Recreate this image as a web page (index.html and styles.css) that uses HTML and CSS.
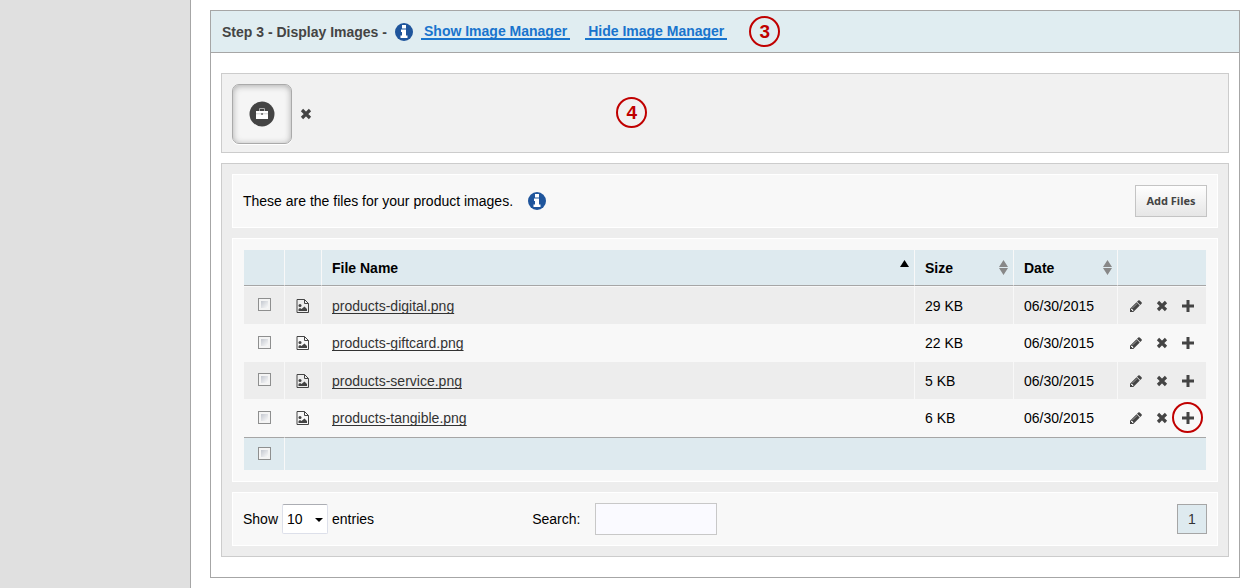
FILE: index.html
```html
<!DOCTYPE html>
<html lang="en">
<head>
    <meta charset="utf-8">
    <title>Display Images</title>
    <link rel="stylesheet" href="styles.css">
</head>
<body>
    <svg class="sprite" aria-hidden="true">
        <symbol id="info" viewBox="0 0 18 18">
            <circle cx="9" cy="9" r="9" fill="#1f559c"/>
            <path d="M7 2h4v3.500H7zM6 6.500h5v6h1.500v2.500h-7v-2.500H7V9H6z" fill="#fff"/>
        </symbol>
        <symbol id="file" viewBox="0 0 13 14">
            <path d="M1 .5h7.500l4 4v9H1z" fill="none" stroke="#444"/>
            <path d="M8.500 .5v4h4" fill="none" stroke="#444"/>
            <circle cx="4" cy="6.500" r="1.500" fill="#444"/>
            <path d="M2.500 12v-2l1.500-1 1.500 1 3-2.500 2.500 2.500v2z" fill="#444"/>
        </symbol>
        <symbol id="pencil" viewBox="128 128 1536 1536">
            <path fill="#444" d="M491 1536l91-91-235-235-91 91v107h128v128h107zm523-928q0-22-22-22-10 0-17 7l-542 542q-7 7-7 17 0 22 22 22 10 0 17-7l542-542q7-7 7-17zm-54-192l416 416-832 832h-416v-416zm683 96q0 53-37 90l-166 166-416-416 166-165q36-38 90-38 53 0 91 38l235 234q37 39 37 91z"/>
        </symbol>
        <symbol id="cross" viewBox="0 0 12 12">
            <path d="M2 2l8 8M10 2L2 10" stroke="#444" stroke-width="3.200"/>
        </symbol>
        <symbol id="plus" viewBox="0 0 12 12">
            <path d="M0 6h12M6 0v12" stroke="#444" stroke-width="3"/>
        </symbol>
        <symbol id="briefcase" viewBox="0 0 26 26">
            <circle cx="13" cy="13" r="12.500" fill="#444"/>
            <path d="M10.500 10V7.500h5V10" fill="none" stroke="#aaa"/>
            <path d="M7 10h12v8H7z" fill="#fff"/>
            <path d="M7 12.500h12v.7H7z" fill="#bbb"/>
            <path d="M12.300 12h1.500v2h-1.500z" fill="#666"/>
        </symbol>
    </svg>

    <div class="sidebar"></div>
    <div class="main">
        <div class="step">
            <div class="step-header">
                <span class="step-title">Step 3 - Display Images -</span>
                <svg class="info"><use href="#info"/></svg>
                <a class="step-link" href="#">Show Image Manager</a>
                <a class="step-link" href="#">Hide Image Manager</a>
                <span class="badge">3</span>
            </div>
            <div class="step-body">
                <div class="selected">
                    <div class="thumb"><svg><use href="#briefcase"/></svg></div>
                    <button class="icon-btn" type="button" aria-label="Remove"><svg><use href="#cross"/></svg></button>
                    <span class="badge badge-over">4</span>
                </div>

                <div class="manager">
                    <div class="panel">
                        <span>These are the files for your product images.</span>
                        <svg class="info"><use href="#info"/></svg>
                        <button class="add-btn" type="button">Add Files</button>
                    </div>

                    <div class="panel panel-table">
                        <table class="files">
                            <colgroup>
                                <col class="col-check"><col class="col-type"><col><col class="col-size"><col class="col-date"><col class="col-actions">
                            </colgroup>
                            <thead>
                                <tr>
                                    <th></th>
                                    <th></th>
                                    <th><div class="sort">File Name <svg class="sort-up" viewBox="0 0 9 7"><path d="M4.500 0L9 7H0z"/></svg></div></th>
                                    <th><div class="sort">Size <svg class="sort-both" viewBox="0 0 9 15"><path d="M4.500 0L9 7H0zM0 8h9l-4.500 7z"/></svg></div></th>
                                    <th><div class="sort">Date <svg class="sort-both" viewBox="0 0 9 15"><path d="M4.500 0L9 7H0zM0 8h9l-4.500 7z"/></svg></div></th>
                                    <th></th>
                                </tr>
                            </thead>
                            <tbody>
                                <tr>
                                    <td><input class="check" type="checkbox" aria-label="Select products-digital.png"></td>
                                    <td><svg class="file"><use href="#file"/></svg></td>
                                    <td><a href="#">products-digital.png</a></td>
                                    <td>29 KB</td>
                                    <td>06/30/2015</td>
                                    <td><div class="actions">
                                        <button class="icon-btn" type="button" aria-label="Edit"><svg><use href="#pencil"/></svg></button>
                                        <button class="icon-btn" type="button" aria-label="Delete"><svg><use href="#cross"/></svg></button>
                                        <button class="icon-btn" type="button" aria-label="Add"><svg><use href="#plus"/></svg></button>
                                    </div></td>
                                </tr>
                                <tr>
                                    <td><input class="check" type="checkbox" aria-label="Select products-giftcard.png"></td>
                                    <td><svg class="file"><use href="#file"/></svg></td>
                                    <td><a href="#">products-giftcard.png</a></td>
                                    <td>22 KB</td>
                                    <td>06/30/2015</td>
                                    <td><div class="actions">
                                        <button class="icon-btn" type="button" aria-label="Edit"><svg><use href="#pencil"/></svg></button>
                                        <button class="icon-btn" type="button" aria-label="Delete"><svg><use href="#cross"/></svg></button>
                                        <button class="icon-btn" type="button" aria-label="Add"><svg><use href="#plus"/></svg></button>
                                    </div></td>
                                </tr>
                                <tr>
                                    <td><input class="check" type="checkbox" aria-label="Select products-service.png"></td>
                                    <td><svg class="file"><use href="#file"/></svg></td>
                                    <td><a href="#">products-service.png</a></td>
                                    <td>5 KB</td>
                                    <td>06/30/2015</td>
                                    <td><div class="actions">
                                        <button class="icon-btn" type="button" aria-label="Edit"><svg><use href="#pencil"/></svg></button>
                                        <button class="icon-btn" type="button" aria-label="Delete"><svg><use href="#cross"/></svg></button>
                                        <button class="icon-btn" type="button" aria-label="Add"><svg><use href="#plus"/></svg></button>
                                    </div></td>
                                </tr>
                                <tr>
                                    <td><input class="check" type="checkbox" aria-label="Select products-tangible.png"></td>
                                    <td><svg class="file"><use href="#file"/></svg></td>
                                    <td><a href="#">products-tangible.png</a></td>
                                    <td>6 KB</td>
                                    <td>06/30/2015</td>
                                    <td><div class="actions">
                                        <button class="icon-btn" type="button" aria-label="Edit"><svg><use href="#pencil"/></svg></button>
                                        <button class="icon-btn" type="button" aria-label="Delete"><svg><use href="#cross"/></svg></button>
                                        <button class="icon-btn ringed" type="button" aria-label="Add"><svg><use href="#plus"/></svg></button>
                                    </div></td>
                                </tr>
                            </tbody>
                            <tfoot>
                                <tr>
                                    <td><input class="check" type="checkbox" aria-label="Select all"></td>
                                    <td colspan="5"></td>
                                </tr>
                            </tfoot>
                        </table>
                    </div>

                    <div class="panel">
                        <div class="length">
                            <label for="length">Show</label>
                            <span class="select-wrap">
                                <select id="length"><option>10</option><option>25</option></select>
                                <svg class="caret" viewBox="0 0 8 4"><path d="M0 0h8L4 4z"/></svg>
                            </span>
                            <span>entries</span>
                        </div>
                        <div class="search">
                            <label for="search">Search:</label>
                            <input id="search" type="text">
                        </div>
                        <button class="page" type="button">1</button>
                    </div>
                </div>
            </div>
        </div>
    </div>
</body>
</html>
```
FILE: styles.css
```css
*, *::after {
    box-sizing: border-box;
}

body {
    display: flex;
    min-height: 100vh;
    margin: 0;
    background-color: #fff;
    color: #000;
    font-family: Arial, "Liberation Sans", sans-serif;
    font-size: 14px;
    line-height: 18px;
}

svg {
    display: block;
    flex: none;
}

button, input, select {
    margin: 0;
    font: inherit;
    color: inherit;
}

.sprite {
    position: absolute;
    width: 0;
    height: 0;
}

.sidebar {
    flex: none;
    width: 191px;
    background-color: #e0e0e0;
    border-right: 1px solid #a6a6a6;
}

.main {
    flex: 1;
    padding: 10px 18px 10px 19px;
}

.step {
    border: 1px solid #a6a6a6;
}

.step-header {
    display: flex;
    align-items: center;
    padding: 5px 11px;
    background-color: #e0edf1;
    border-bottom: 1px solid #a6a6a6;
    color: #444;
    font-weight: bold;
}

.step-title {
    min-width: 173px;
}

.info {
    width: 18px;
    height: 18px;
}

.step-link {
    margin-left: 8px;
    padding: 0 3px;
    border-bottom: 2px solid #1874cd;
    color: #1874cd;
    line-height: 14px;
    text-decoration: none;
}

.step-link + .step-link {
    margin-left: 15px;
}

.badge {
    width: 31px;
    height: 31px;
    margin-left: 22px;
    border: 2px solid #c00000;
    border-radius: 50%;
    color: #c00000;
    font-size: 19px;
    font-weight: bold;
    line-height: 27px;
    text-align: center;
}

.step-body {
    display: flex;
    flex-direction: column;
    gap: 10px;
    padding: 20px 10px;
}

.selected {
    position: relative;
    display: flex;
    align-items: center;
    gap: 8px;
    padding: 10px 10px 8px;
    background-color: #f1f1f1;
    border: 1px solid #ccc;
}

.badge-over {
    position: absolute;
    top: 23px;
    left: 39.2%;
    margin: 0;
}

.thumb {
    display: flex;
    align-items: center;
    justify-content: center;
    width: 60px;
    height: 60px;
    background-color: #f5f5f5;
    border: 1px solid #aaa;
    border-radius: 7px;
    box-shadow: inset 0 1px 6px #aaa, 0 1px 0 #fff;
}

.thumb svg {
    width: 26px;
    height: 26px;
}

.icon-btn {
    padding: 0;
    background: none;
    border: 0;
    cursor: pointer;
}

.icon-btn svg {
    width: 12px;
    height: 12px;
}

.manager {
    display: flex;
    flex-direction: column;
    gap: 10px;
    padding: 10px;
    background-color: #ededed;
    border: 1px solid #ccc;
}

.panel {
    display: flex;
    align-items: center;
    min-height: 54px;
    padding: 10px;
    background-color: #f8f8f8;
    border: 1px solid #fff;
}

.panel > .info {
    margin-left: 15px;
}

.panel-table {
    padding: 11px;
}

.add-btn {
    min-width: 72px;
    height: 32px;
    margin-left: auto;
    padding: 0 8px;
    background: linear-gradient(#fefefe, #e6e6e6);
    border: 1px solid #c4c4c4;
    color: #444;
    font-family: "Noto Sans", sans-serif;
    font-size: 11px;
    font-weight: bold;
}

.files {
    width: 100%;
    table-layout: fixed;
    border-collapse: separate;
    border-spacing: 0;
}

.col-check {
    width: 41px;
}

.col-type {
    width: 37px;
}

.col-size {
    width: 99px;
}

.col-date {
    width: 104px;
}

.col-actions {
    width: 88px;
}

.files th, .files td {
    padding: 0 10px;
    border-right: 1px solid #f8f8f8;
    text-align: left;
}

.files th:last-child, .files td:last-child {
    border-right: 0;
}

.files th {
    height: 36px;
    background-color: #deeaef;
    border-bottom: 1px solid #a6a6a6;
}

.files tbody td {
    height: 38px;
}

.files tbody tr:nth-child(odd) td {
    background-color: #ededed;
}

.files tbody tr:first-child td {
    border-top: 1px solid #f8f8f8;
}

.files tbody tr:nth-child(3) td {
    height: 37px;
}

.files tfoot td {
    height: 33px;
    background-color: #deeaef;
    border-top: 1px solid #a6a6a6;
}

.files a {
    color: #333;
    text-underline-offset: 2px;
    text-decoration-skip-ink: none;
}

.sort {
    display: flex;
    justify-content: space-between;
    height: 18px;
}

.sort svg {
    width: 9px;
    margin-right: -5px;
}

.sort-up {
    height: 7px;
    margin-top: 1px;
}

.sort-both {
    height: 15px;
    margin-top: 1px;
    fill: #888;
}

.check {
    display: block;
    width: 13px;
    height: 13px;
    margin: 0 0 2px 4px;
    appearance: none;
    background: linear-gradient(135deg, #c4c8d0, #fafafa) content-box, #f4f4f4;
    border: 1px solid #8e8f8f;
    padding: 2px;
}

.file {
    width: 13px;
    height: 14px;
    margin-left: 1px;
}

.actions {
    display: flex;
    gap: 14px;
    padding-left: 2px;
}

/* red ring drawn around the add button */
.ringed {
    position: relative;
}

.ringed::after {
    content: "";
    position: absolute;
    top: -10px;
    left: -10px;
    width: 31px;
    height: 31px;
    border: 2px solid #c00000;
    border-radius: 50%;
}

.length {
    display: flex;
    align-items: center;
    gap: 4px;
    width: 30%;
}

.select-wrap {
    position: relative;
}

.length select {
    display: block;
    width: 46px;
    height: 30px;
    padding: 0 4px;
    appearance: none;
    background-color: #fff;
    border: 1px solid #dde0ea;
    border-top-color: #abadb3;
    border-radius: 2px;
}

.caret {
    position: absolute;
    top: 14px;
    right: 5px;
    width: 8px;
    height: 4px;
    pointer-events: none;
}

.search {
    display: flex;
    align-items: center;
    gap: 15px;
}

.search input {
    width: 122px;
    height: 32px;
    padding: 0 8px;
    background-color: #fafaff;
    border: 1px solid #c8c8c8;
}

.page {
    width: 30px;
    height: 30px;
    margin-left: auto;
    padding: 0;
    background-color: #deeaef;
    border: 1px solid #a6a6a6;
    color: #333;
}
```
